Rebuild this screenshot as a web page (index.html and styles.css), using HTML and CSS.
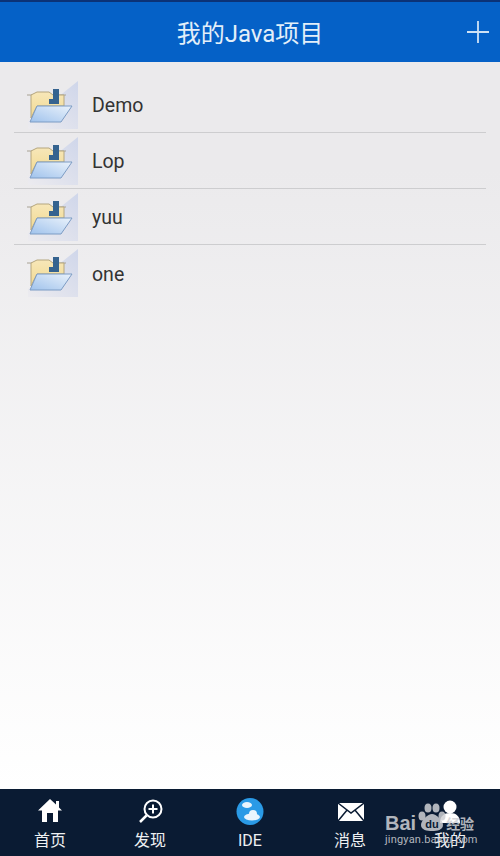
FILE: index.html
```html
<!DOCTYPE html>
<html lang="zh-CN">
<head>
    <meta charset="UTF-8">
    <meta name="viewport" content="width=device-width, initial-scale=1.0">
    <title>我的Java项目</title>
    <link rel="stylesheet" href="styles.css">
</head>
<body>
    <div class="status-strip"></div>
    <header class="title-bar">
        <h1>我的Java项目</h1>
        <svg class="add-icon" viewBox="0 0 24 24" width="24" height="24">
            <path d="M12 1v22M1 12h22" stroke="#cfe2f5" stroke-width="1.800" fill="none"/>
        </svg>
    </header>

    <main class="content">
        <ul class="project-list">
            <li class="project">
                <svg class="folder" viewBox="0 0 64 48" width="64" height="48">
                    <use href="#folder-icon"/>
                </svg>
                <span class="project-name">Demo</span>
            </li>
            <li class="project">
                <svg class="folder" viewBox="0 0 64 48" width="64" height="48">
                    <use href="#folder-icon"/>
                </svg>
                <span class="project-name">Lop</span>
            </li>
            <li class="project">
                <svg class="folder" viewBox="0 0 64 48" width="64" height="48">
                    <use href="#folder-icon"/>
                </svg>
                <span class="project-name">yuu</span>
            </li>
            <li class="project">
                <svg class="folder" viewBox="0 0 64 48" width="64" height="48">
                    <use href="#folder-icon"/>
                </svg>
                <span class="project-name">one</span>
            </li>
        </ul>
    </main>

    <nav class="tab-bar">
        <div class="tab">
            <svg viewBox="0 0 28 28" width="28" height="28">
                <path d="M14 2L2 13.500h4V25h5v-9h6v9h5V13.500h4l-3-3V4h-3v3.500z" fill="#fff"/>
            </svg>
            <span>首页</span>
        </div>
        <div class="tab">
            <svg viewBox="0 0 28 28" width="28" height="28">
                <circle cx="17" cy="12" r="8.500" fill="none" stroke="#fff" stroke-width="2"/>
                <path d="M10.500 18.500L4 25" stroke="#fff" stroke-width="2.500"/>
                <path d="M17 7.500v9M12.500 12h9" stroke="#fff" stroke-width="2"/>
            </svg>
            <span>发现</span>
        </div>
        <div class="tab">
            <svg viewBox="0 0 28 28" width="28" height="28">
                <circle cx="14" cy="14.500" r="13.500" fill="#2a9ae6"/>
                <ellipse cx="11" cy="8" rx="5" ry="3" fill="#eaf5fd"/>
                <ellipse cx="16" cy="20" rx="8" ry="3.500" fill="#eaf5fd"/>
                <circle cx="17" cy="17" r="4" fill="#eaf5fd"/>
            </svg>
            <span>IDE</span>
        </div>
        <div class="tab">
            <svg viewBox="0 0 28 28" width="28" height="28">
                <rect x="2" y="6" width="26" height="18" fill="#fff"/>
                <path d="M2 6l13 10L28 6M2 24l9.500-11.500M28 24l-9.500-11.500" fill="none" stroke="#0a1b33" stroke-width="1.500"/>
            </svg>
            <span>消息</span>
        </div>
        <div class="tab">
            <svg viewBox="0 0 28 28" width="28" height="28">
                <circle cx="14" cy="10" r="6.500" fill="#fff"/>
                <path d="M4 26c0-7 4-10 10-10s10 3 10 10z" fill="#fff"/>
            </svg>
            <span>我的</span>
        </div>
    </nav>

    <div class="watermark">
        <div class="wm-logo">
            <span class="wm-bai">Bai</span>
            <svg class="wm-paw" viewBox="0 0 28 28" width="28" height="28">
                <ellipse cx="4" cy="13" rx="3.500" ry="4.500" fill="#cfd1d5"/>
                <ellipse cx="10" cy="5" rx="3.500" ry="4.500" fill="#cfd1d5"/>
                <ellipse cx="18" cy="5" rx="3.500" ry="4.500" fill="#cfd1d5"/>
                <ellipse cx="24" cy="13" rx="3.500" ry="4.500" fill="#cfd1d5"/>
                <path d="M14 11c-4 0-11 6-11 11 0 5 6 6 11 6s11-1 11-6c0-5-7-11-11-11z" fill="#cfd1d5"/>
                <text x="14" y="25" class="wm-du">du</text>
            </svg>
            <span class="wm-jy">经验</span>
        </div>
        <div class="wm-url">jingyan.baidu.com</div>
    </div>

    <svg class="defs" width="0" height="0">
        <defs>
            <linearGradient id="tile" x1="0" y1="1" x2="1" y2="0">
                <stop offset="0" stop-color="#ecebef"/>
                <stop offset="1" stop-color="#cfd6ea"/>
            </linearGradient>
            <linearGradient id="front" x1="0" y1="1" x2="1" y2="0">
                <stop offset="0" stop-color="#9fc2ec"/>
                <stop offset="1" stop-color="#eaf2fb"/>
            </linearGradient>
            <linearGradient id="back" x1="0" y1="0" x2="0" y2="1">
                <stop offset="0" stop-color="#f7e7b8"/>
                <stop offset="1" stop-color="#f1d992"/>
            </linearGradient>
            <symbol id="folder-icon" viewBox="0 0 64 48">
                <path d="M64 0V48H14V40z" fill="url(#tile)"/>
                <path d="M13 14H52" stroke="#a8a294" stroke-width="1"/>
                <path d="M17 37V14l6-3h12l4 3h11v11H23z" fill="url(#back)" stroke="#b5a67e"/>
                <rect x="39" y="8" width="6" height="15" fill="#35638f"/>
                <rect x="35" y="18" width="8" height="5" fill="#35638f"/>
                <path d="M23 25h35L47 41H16z" fill="url(#front)" stroke="#7d9cc4"/>
            </symbol>
        </defs>
    </svg>
</body>
</html>
```

FILE: styles.css
```css
* {
    box-sizing: border-box;
}
html, body {
    height: 100%;
}
body {
    position: relative;
    display: flex;
    flex-direction: column;
    margin: 0;
    font-family: "Roboto", "Noto Sans CJK SC", sans-serif;
    background-color: #fff;
    overflow: hidden;
}
.status-strip {
    height: 2px;
    background-color: #0b3277;
}
.title-bar {
    display: flex;
    align-items: center;
    justify-content: center;
    position: relative;
    height: 60px;
    padding-bottom: 2px;
    background-color: #0561c7;
}
.title-bar h1 {
    margin: 0;
    font-size: 24px;
    font-weight: 400;
    color: #e3eff9;
}
.add-icon {
    position: absolute;
    right: 10px;
    top: 18px;
}
.content {
    flex: 1;
    padding: 15px 14px 0;
    background: linear-gradient(#ebeaec, #ebeaec 15%, #fff 100%);
}
.project-list {
    list-style-type: none;
    margin: 0;
    padding: 0;
}
.project {
    display: flex;
    align-items: center;
    gap: 14px;
    height: 56px;
    border-bottom: 1px solid #cdcdcf;
    font-size: 19.500px;
    color: #333;
}
.project:last-child {
    border-bottom: none;
}
.project-name {
    padding-top: 2px;
}
.folder {
    flex: none;
}
.tab-bar {
    display: flex;
    height: 67px;
    padding-top: 8px;
    background-color: #0a1b33;
}
.tab {
    flex: 1;
    display: flex;
    flex-direction: column;
    align-items: center;
    gap: 6px;
    font-size: 16px;
    line-height: 20px;
    color: #eef0f2;
}
.watermark {
    position: absolute;
    left: 385px;
    top: 803px;
    color: #cfd1d5;
    opacity: 0.85;
}
.wm-logo {
    display: flex;
    align-items: flex-end;
    height: 28px;
}
.wm-bai {
    font-family: "Liberation Sans", sans-serif;
    font-size: 20px;
    line-height: 16px;
    font-weight: 700;
}
.wm-paw {
    margin-left: 2px;
}
.wm-du {
    font-family: "Liberation Sans", sans-serif;
    font-size: 11px;
    font-weight: 700;
    text-anchor: middle;
    fill: #0a1b33;
}
.wm-jy {
    font-size: 14px;
    line-height: 14px;
    font-weight: 700;
}
.wm-url {
    margin-top: 3px;
    font-size: 11px;
    line-height: 12px;
    letter-spacing: 0.2px;
}
.defs {
    position: absolute;
}
```
